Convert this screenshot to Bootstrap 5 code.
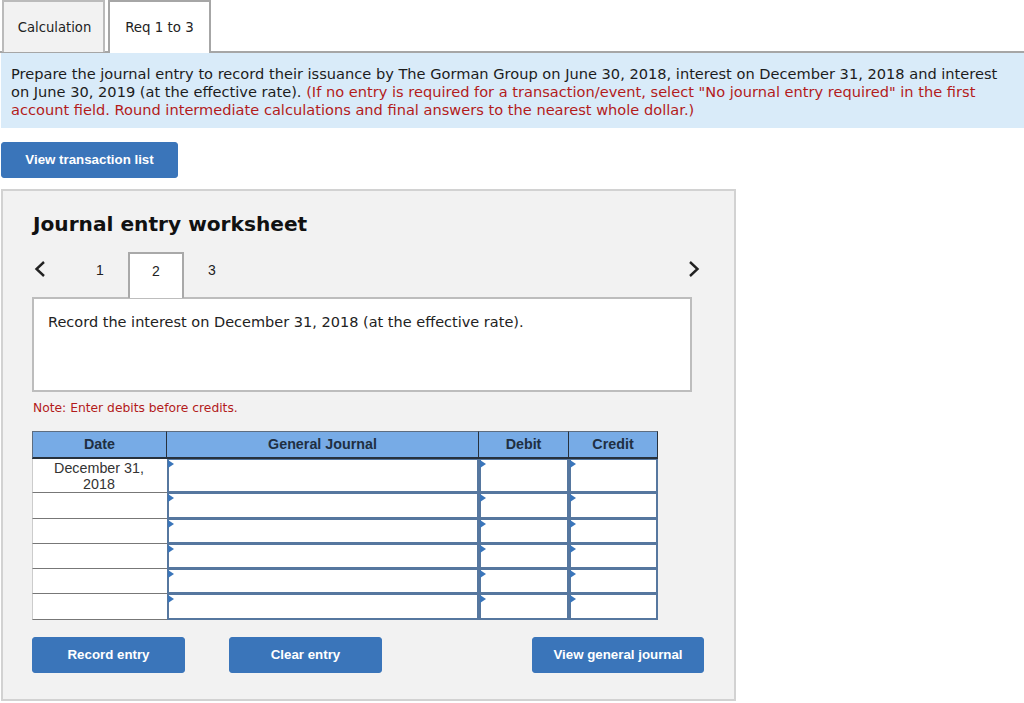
<!DOCTYPE html>
<html lang="en">
<head>
<meta charset="utf-8">
<title>Journal entry worksheet</title>
<link href="https://cdn.jsdelivr.net/npm/bootstrap@5.3.0/dist/css/bootstrap.min.css" rel="stylesheet">
<style>
html,body{height:703px;overflow:hidden}
body{font-family:"DejaVu Sans",Verdana,sans-serif;font-size:14px;color:#111;background:#fff;margin:0}
.req-tabs{height:53px;padding-left:2px;gap:3px;border-bottom:2px solid #a6a6a6;margin-bottom:0;--bs-nav-tabs-border-width:0}
.req-tabs .nav-link{font-size:13.2px;height:52px;margin:0;padding:2px 0 0 2px;display:flex;align-items:center;justify-content:center;color:#222;border:2px solid #bbb;border-bottom:0;border-radius:0;background:#f2f2f2;width:103px}
.req-tabs .nav-link.active{background:#fff;border-color:#a6a6a6;height:53px;color:#222;width:103px;position:relative;z-index:1;font-size:13.4px;padding:2px 0 0 0}
.prompt{background:#d9ebf9;margin-left:1px;height:75px;padding:12px 10px 0 10px;line-height:18px;font-size:14.6px;color:#1c1c1c}
.warn{color:#b31b1b}
.act{background:#3a75ba;border:1px solid #3a75ba;color:#fff;font-family:"Liberation Sans",Arial,sans-serif;font-weight:700;font-size:13.3px;border-radius:3px;padding:0;height:36px}
.act:hover{background:#3a75ba;border-color:#3a75ba;color:#fff}
.list-act{width:177px;margin:14px 0 11px 1px;display:block;height:36px}
.sheet{width:735px;height:512px;margin-left:1px;background:#f2f2f2;border:2px solid #d2d2d2;padding:0 30px 0 30px}
.sheet-title{font-family:"DejaVu Sans",Verdana,sans-serif;font-weight:700;font-size:20.15px;line-height:26px;margin:20px 0 15px 0;color:#111}
.steps{height:46px;width:671px;position:relative;z-index:1;margin-bottom:-1px}
.steps svg{display:block}
.step-back{width:17px;margin:0 0 13px 0}
.step-num{width:56px;height:46px;display:flex;align-items:center;justify-content:center;font-family:"Liberation Sans",Arial,sans-serif;font-size:14px;color:#222;padding-bottom:10px}
.step-first{margin-left:22px}
.step-on{background:#fff;border:2px solid #a9a9a9;border-bottom:0;height:46px}
.step-next{margin:0 0 13px auto;width:17px}
.task{width:660px;height:95px;margin-left:-1px;background:#fff;border:2px solid #bdbdbd;padding:13px 14px;font-size:14.5px;line-height:20px;color:#222}
.note{font-size:12.3px;color:#b31b1b;line-height:16px;margin:8px 0 15px 0}
.jt{width:626px;table-layout:fixed;border-collapse:separate;border-spacing:0;margin:0 0 17px -1px;font-family:"Liberation Sans",Arial,sans-serif;font-size:14.3px;color:#333}
.jt th{background:#77abe6;height:28px;padding:0 0 1px 0;text-align:center;font-weight:700;color:#202f42;border-top:1px solid #5d6d80;border-bottom:2px solid #27313c;border-right:1px solid #27313c;line-height:16px}
.jt th:first-child{border-left:1px solid #5d6d80}
.jt th:last-child{border-right:1px solid #27313c}
.jt td{padding:0;background:#fff;position:relative}
.jt .dc{text-align:center;line-height:16px;border-bottom:1px solid #777;border-left:1px solid #ccc;vertical-align:middle;padding:0 11px 0 9px}
.jt .fc{border:2px solid #56779f;border-top-width:1px}
.jt .fc::before{content:"";position:absolute;left:-1px;top:0;border-left:6px solid #3a75ba;border-top:4px solid transparent;border-bottom:4px solid transparent}
.r0 td{height:34px}.r1 td{height:26px}.r2 td,.r3 td,.r4 td{height:25px}.r5 td{height:26px}
.act-row{width:672px;margin-left:-1px}
.act-a{width:153px}.act-b{width:153px;margin-left:44px}.act-c{width:172px;margin-left:auto}
</style>
</head>
<body>
<ul class="nav nav-tabs req-tabs">
  <li class="nav-item"><a class="nav-link" href="#">Calculation</a></li>
  <li class="nav-item"><a class="nav-link active" href="#">Req 1 to 3</a></li>
</ul>
<div class="prompt">Prepare the journal entry to record their issuance by The Gorman Group on June 30, 2018, interest on December 31, 2018 and interest on June 30, 2019 (at the effective rate). <span class="warn">(If no entry is required for a transaction/event, select "No journal entry required" in the first account field. Round intermediate calculations and final answers to the nearest whole dollar.)</span></div>
<button type="button" class="btn act list-act">View transaction list</button>
<div class="sheet">
  <h1 class="sheet-title">Journal entry worksheet</h1>
  <div class="steps d-flex align-items-center">
    <div class="step-back"><svg width="14" height="20" viewBox="0 0 14 20"><path d="M11 3 3.5 10 11 17" fill="none" stroke="#222" stroke-width="2.4"/></svg></div>
    <div class="step-num step-first">1</div>
    <div class="step-num step-on">2</div>
    <div class="step-num">3</div>
    <div class="step-next"><svg width="14" height="20" viewBox="0 0 14 20"><path d="M3 3 10.5 10 3 17" fill="none" stroke="#222" stroke-width="2.4"/></svg></div>
  </div>
  <div class="task">Record the interest on December 31, 2018 (at the effective rate).</div>
  <p class="note">Note: Enter debits before credits.</p>
  <table class="jt">
    <colgroup><col style="width:135px"><col style="width:312px"><col style="width:90px"><col style="width:89px"></colgroup>
    <thead><tr><th>Date</th><th>General Journal</th><th>Debit</th><th>Credit</th></tr></thead>
    <tbody>
      <tr class="r0"><td class="dc">December 31, 2018</td><td class="fc"></td><td class="fc"></td><td class="fc"></td></tr>
      <tr class="r1"><td class="dc"></td><td class="fc"></td><td class="fc"></td><td class="fc"></td></tr>
      <tr class="r2"><td class="dc"></td><td class="fc"></td><td class="fc"></td><td class="fc"></td></tr>
      <tr class="r3"><td class="dc"></td><td class="fc"></td><td class="fc"></td><td class="fc"></td></tr>
      <tr class="r4"><td class="dc"></td><td class="fc"></td><td class="fc"></td><td class="fc"></td></tr>
      <tr class="r5"><td class="dc"></td><td class="fc"></td><td class="fc"></td><td class="fc"></td></tr>
    </tbody>
  </table>
  <div class="act-row d-flex">
    <button type="button" class="btn act act-a">Record entry</button>
    <button type="button" class="btn act act-b">Clear entry</button>
    <button type="button" class="btn act act-c">View general journal</button>
  </div>
</div>
<script src="https://cdn.jsdelivr.net/npm/bootstrap@5.3.0/dist/js/bootstrap.bundle.min.js"></script>
</body>
</html>
